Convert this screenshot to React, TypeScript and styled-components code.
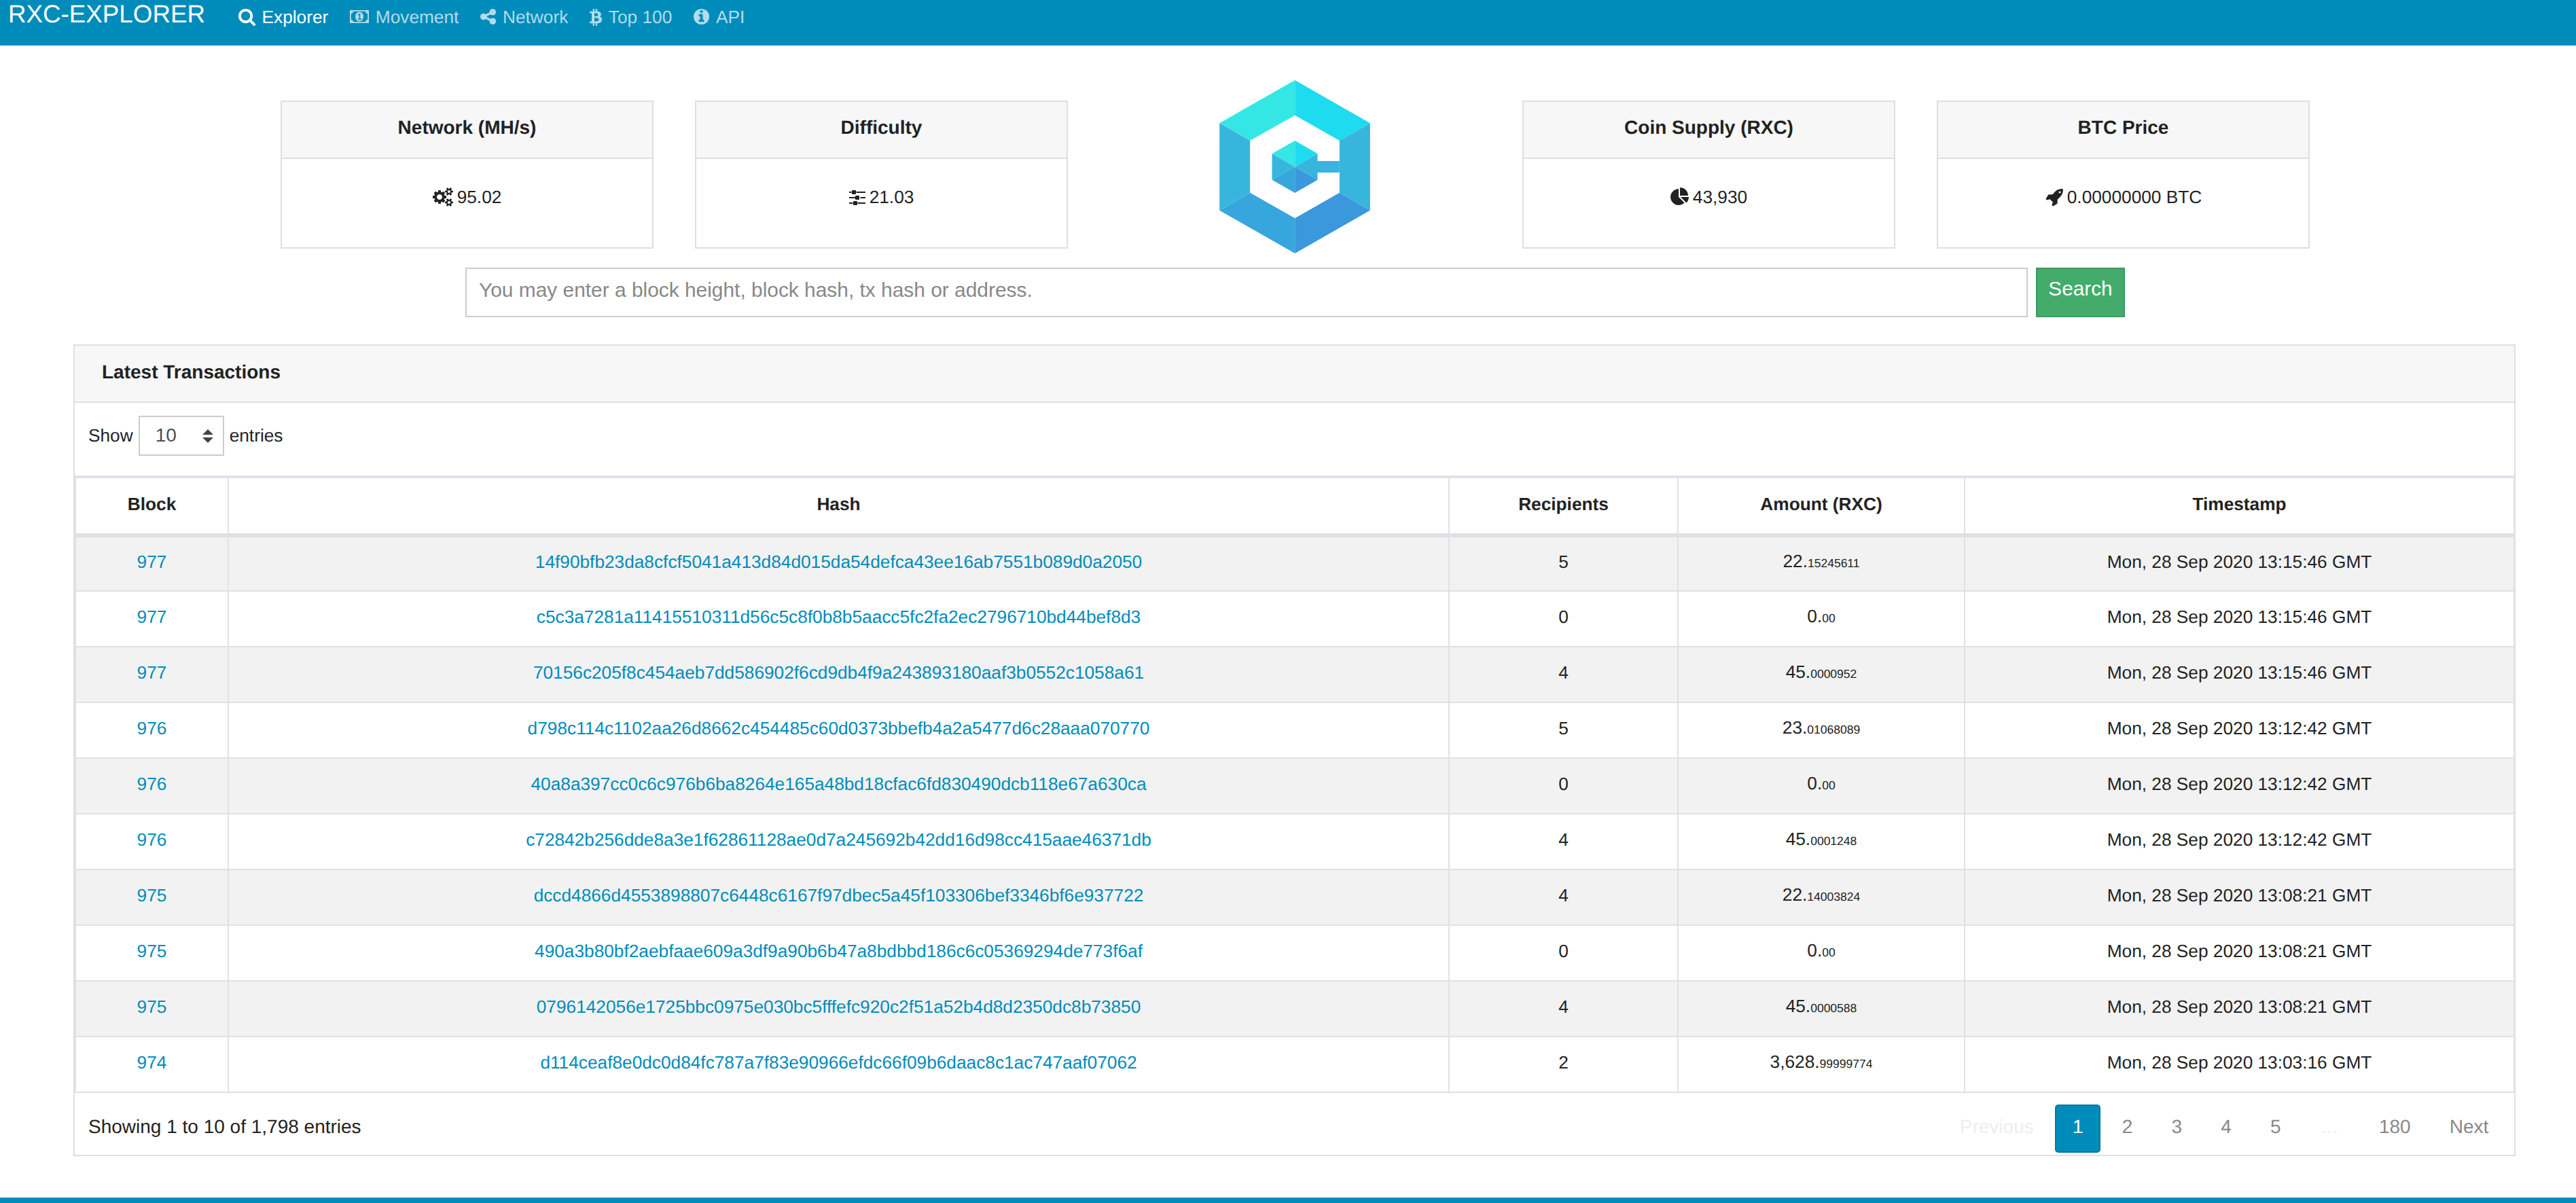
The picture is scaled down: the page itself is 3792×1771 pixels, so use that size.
import styled, { createGlobalStyle } from "styled-components";

const GlobalStyle = createGlobalStyle`
  * {
    box-sizing: border-box;
  }
  html, body {
    margin: 0;
    padding: 0;
    background: #fff;
    color: #222;
    font-family: "Liberation Sans", Arial, sans-serif;
    font-size: 26.25px;
    line-height: 42px;
    text-rendering: geometricPrecision;
  }
`;

const color = {
  primary: "#008cba",
  text: "#222222",
  headerBg: "#f7f7f7",
  cardBorder: "#dfdfdf",
  tableBorder: "#dee2e6",
  stripe: "#f2f2f2",
};

const Page = styled.div`
  width: 3792px;
  height: 1771px;
  overflow: hidden;
  display: flex;
  flex-direction: column;
`;

const NavBar = styled.nav`
  height: 67px;
  flex-shrink: 0;
  background: ${color.primary};
  display: flex;
  align-items: flex-start;
  padding-left: 12px;
`;

const Brand = styled.a`
  color: #fff;
  font-size: 36.75px;
  line-height: 42px;
  margin-right: 49px;
`;

const NavList = styled.div`
  display: flex;
  gap: 32px;
`;

const NavLink = styled.a<{ $active?: boolean }>`
  display: flex;
  align-items: center;
  gap: 9.5px;
  height: 49px;
  color: ${(p) => (p.$active ? "#fff" : "#b2dcea")};
`;

const Main = styled.main`
  width: 3595px;
  margin-left: 108px;
  flex: 1;
  padding-top: 51px;
`;

const StatRow = styled.section`
  display: flex;
  justify-content: center;
  align-items: flex-start;
  height: 255px;
  padding-left: 2px;
`;

const StatCard = styled.div<{ $gap?: number }>`
  width: 549px;
  height: 218px;
  margin-top: 30px;
  margin-right: ${(p) => p.$gap ?? 0}px;
  border: 2px solid ${color.cardBorder};
  display: flex;
  flex-direction: column;
`;

const StatTitle = styled.div`
  height: 84px;
  padding-bottom: 6px;
  background: ${color.headerBg};
  border-bottom: 2px solid ${color.cardBorder};
  font-size: 28px;
  font-weight: 700;
  display: flex;
  align-items: center;
  justify-content: center;
`;

const StatValue = styled.div`
  display: flex;
  justify-content: center;
  align-items: center;
  gap: 6px;
  height: 42px;
  margin-top: 35px;
`;

const LogoSlot = styled.div`
  width: 669px;
  padding-right: 2px;
  display: flex;
  justify-content: center;
`;

const SearchRow = styled.form`
  display: flex;
  justify-content: center;
  gap: 12px;
  margin-top: 21px;
  padding-left: 2px;
`;

const SearchInput = styled.input`
  width: 2300px;
  height: 73px;
  border: 2px solid #cccccc;
  padding: 0 18px 8px;
  font-family: inherit;
  font-size: 29.9px;
  background: #fff;
  outline: none;

  &::placeholder {
    color: #888888;
    opacity: 1;
  }
`;

const SearchButton = styled.button`
  width: 131px;
  height: 73px;
  background: #43ac6a;
  border: 2px solid #3c9a5f;
  color: #fff;
  padding: 0 0 12px;
  font-family: inherit;
  font-size: 29.75px;
`;

const Panel = styled.section`
  margin-top: 40px;
  border: 2px solid ${color.cardBorder};
`;

const PanelHeader = styled.div`
  height: 84px;
  padding: 0 0 5px 40px;
  background: ${color.headerBg};
  border-bottom: 2px solid ${color.cardBorder};
  font-size: 28px;
  font-weight: 700;
  display: flex;
  align-items: center;
`;

const LengthRow = styled.div`
  height: 107px;
  padding: 19px 0 0 20px;
  display: flex;
  align-items: flex-start;
  gap: 8px;
`;

const LengthLabel = styled.span`
  line-height: 58px;
`;

const SelectWrap = styled.div`
  position: relative;
  width: 126px;
  height: 59px;
`;

const Select = styled.select`
  width: 100%;
  height: 100%;
  appearance: none;
  background: #fff;
  border: 2px solid #cccccc;
  border-radius: 0;
  padding: 0 0 2px 23px;
  font-family: inherit;
  font-size: 28px;
  color: #495057;
`;

const SelectArrows = styled.svg`
  position: absolute;
  right: 16px;
  top: 20px;
  width: 16px;
  height: 20px;
  pointer-events: none;
`;

const Table = styled.table`
  width: 100%;
  table-layout: fixed;
  border-collapse: collapse;
`;

const HeadCell = styled.th<{ $width: number }>`
  width: ${(p) => p.$width}px;
  height: 86px;
  padding: 0 0 6px;
  border: 2px solid ${color.tableBorder};
  border-top-width: 4px;
  border-bottom-width: 6px;
  font-weight: 700;
  text-align: center;
`;

const Row = styled.tr<{ $striped: boolean }>`
  background: ${(p) => (p.$striped ? color.stripe : "#fff")};
`;

const Cell = styled.td`
  height: 82px;
  padding: 0 0 6px;
  border: 2px solid ${color.tableBorder};
  text-align: center;
`;

const TxLink = styled.a`
  color: ${color.primary};
`;

const Decimals = styled.span`
  font-size: 17.5px;
`;

const PanelFooter = styled.div`
  height: 91px;
  padding: 17px 12px 0 20px;
  font-size: 28px;
  display: flex;
  justify-content: space-between;
  align-items: flex-start;
`;

const Info = styled.div`
  margin-top: 12px;
`;

const Pagination = styled.div`
  display: flex;
  gap: 6px;
`;

const PageButton = styled.a<{ $active?: boolean; $disabled?: boolean }>`
  height: 71px;
  padding: 0 23.6px 6px;
  display: flex;
  align-items: center;
  border: 2px solid ${(p) => (p.$active ? "#0079a1" : "transparent")};
  border-radius: 5px;
  background: ${(p) => (p.$active ? color.primary : "transparent")};
  color: ${(p) => (p.$active ? "#fff" : p.$disabled ? "#eeeeee" : "#888888")};
`;

const PageEllipsis = styled(PageButton)`
  padding-right: 25.6px;
`;

const PageFooter = styled.footer`
  height: 8px;
  flex-shrink: 0;
  background: ${color.primary};
`;

const glyphs = {
  search: {
    x: 64,
    w: 1664,
    d: "M1216 832q0-185-131.5-316.5t-316.5-131.5-316.5 131.5-131.5 316.5 131.5 316.5 316.5 131.5 316.5-131.5 131.5-316.5zm512 832q0 52-38 90t-90 38q-54 0-90-38l-343-342q-179 124-399 124-143 0-273.5-55.5t-225-150-150-225-55.5-273.5 55.5-273.5 150-225 225-150 273.5-55.5 273.5 55.5 225 150 150 225 55.5 273.5q0 220-124 399l343 343q37 37 37 90z",
  },
  share: {
    x: 128,
    w: 1536,
    d: "M1344 1024q133 0 226.5 93.5t93.5 226.5-93.5 226.5-226.5 93.5-226.5-93.5-93.5-226.5q0-12 2-34l-360-180q-92 86-218 86-133 0-226.5-93.5t-93.5-226.5 93.5-226.5 226.5-93.5q126 0 218 86l360-180q-2-22-2-34 0-133 93.5-226.5t226.5-93.5 226.5 93.5 93.5 226.5-93.5 226.5-226.5 93.5q-126 0-218-86l-360 180q2 22 2 34t-2 34l360 180q92-86 218-86z",
  },
  btc: {
    x: 56,
    w: 1200,
    d: "M1167 640q18 182-131 258 117 28 175 103t45 214q-7 71-32.5 125t-64.5 89-97 58.5-121.5 34.5-145.5 15v255h-154v-251q-80 0-122-1v252h-154v-255q-18 0-54-.5t-55-.5h-200l31-183h111q50 0 58-51v-402h16q-6-1-16-1v-287q-13-68-89-68h-111v-164l212 1q64 0 97-1v-252h154v247q82-2 122-2v-245h154v252q79 7 140 22.5t113 45 82.5 78 36.5 114.5zm-215 545q0-36-15-64t-37-46-57.5-30.5-65.5-18.5-74-9-69-3-64.5 1-47.5 1v338q8 0 37 .5t48 .5 53-1.5 58.5-4 57-8.5 55.5-14 47.5-21 39.5-30 24.5-40 9.5-51zm-71-476q0-33-12.5-58.5t-30.5-42-48-28-55-16.5-61.5-8-58-2.5-54 1-39.5.5v307q5 0 34.5.5t46.5 0 50-2 55-5.5 51.5-11 48.5-18.5 37-27 27-38.5 9-51z",
  },
  info: {
    x: 128,
    w: 1536,
    d: "M1152 1376v-160q0-14-9-23t-23-9h-96v-512q0-14-9-23t-23-9h-320q-14 0-23 9t-9 23v160q0 14 9 23t23 9h96v320h-96q-14 0-23 9t-9 23v160q0 14 9 23t23 9h448q14 0 23-9t9-23zm-128-896v-160q0-14-9-23t-23-9h-192q-14 0-23 9t-9 23v160q0 14 9 23t23 9h192q14 0 23-9t9-23zm640 416q0 209-103 385.5t-279.5 279.5-385.5 103-385.5-103-279.5-279.5-103-385.5 103-385.5 279.5-279.5 385.5-103 385.5 103 279.5 279.5 103 385.5z",
  },
  cogs: {
    x: 0,
    w: 1920,
    d: "M896 896q0-106-75-181t-181-75-181 75-75 181 75 181 181 75 181-75 75-181zm768 512q0-52-38-90t-90-38-90 38-38 90q0 53 37.5 90.5t90.5 37.5 90.5-37.5 37.5-90.5zm0-1024q0-52-38-90t-90-38-90 38-38 90q0 53 37.5 90.5t90.5 37.5 90.5-37.5 37.5-90.5zm-384 421v185q0 10-7 19.5t-16 10.5l-155 24q-11 35-32 76 34 48 90 115 7 11 7 20 0 12-7 19-23 30-82.5 89.5t-78.5 59.5q-11 0-21-7l-115-90q-37 19-77 31-11 108-23 155-7 24-30 24h-186q-11 0-20-7.5t-10-17.5l-23-153q-34-10-75-31l-118 89q-7 7-20 7-11 0-21-8-144-133-144-160 0-9 7-19 10-14 41-53t47-61q-23-44-35-82l-152-24q-10-1-17-9.5t-7-19.5v-185q0-10 7-19.5t16-10.5l155-24q11-35 32-76-34-48-90-115-7-11-7-19 0-12 7-20 22-30 82-89t79-59q11 0 21 7l115 90q34-18 77-32 11-108 23-154 7-24 30-24h186q11 0 20 7.5t10 17.5l23 153q34 10 75 31l118-89q8-7 20-7 11 0 21 8 144 133 144 160 0 8-7 19-12 16-42 54t-45 60q23 48 34 82l152 23q10 2 17 10.5t7 19.5zm640 533v140q0 16-149 31-12 27-30 52 51 113 51 138 0 4-4 7-122 71-124 71-8 0-46-47t-52-68q-20 2-30 2t-30-2q-14 21-52 68t-46 47q-2 0-124-71-4-3-4-7 0-25 51-138-18-25-30-52-149-15-149-31v-140q0-16 149-31 13-29 30-52-51-113-51-138 0-4 4-7 4-2 35-20t59-34 30-16q8 0 46 46.5t52 67.5q20-2 30-2t30 2q51-71 92-112l6-2q4 0 124 70 4 3 4 7 0 25-51 138 17 23 30 52 149 15 149 31zm0-1024v140q0 16-149 31-12 27-30 52 51 113 51 138 0 4-4 7-122 71-124 71-8 0-46-47t-52-68q-20 2-30 2t-30-2q-14 21-52 68t-46 47q-2 0-124-71-4-3-4-7 0-25 51-138-18-25-30-52-149-15-149-31v-140q0-16 149-31 13-29 30-52-51-113-51-138 0-4 4-7 4-2 35-20t59-34 30-16q8 0 46 46.5t52 67.5q20-2 30-2t30 2q51-71 92-112l6-2q4 0 124 70 4 3 4 7 0 25-51 138 17 23 30 52 149 15 149 31z",
  },
  sliders: {
    x: 128,
    w: 1536,
    d: "M480 1408v128h-352v-128h352zm352-128q26 0 45 19t19 45v256q0 26-19 45t-45 19h-256q-26 0-45-19t-19-45v-256q0-26 19-45t45-19h256zm160-384v128h-864v-128h864zm-640-512v128h-224v-128h224zm1312 1024v128h-736v-128h736zm-960-1152q26 0 45 19t19 45v256q0 26-19 45t-45 19h-256q-26 0-45-19t-19-45v-256q0-26 19-45t45-19h256zm320 512q26 0 45 19t19 45v256q0 26-19 45t-45 19h-256q-26 0-45-19t-19-45v-256q0-26 19-45t45-19h256zm640 128v128h-480v-128h480zm0-512v128h-864v-128h864z",
  },
  pie: {
    x: 0,
    w: 1728,
    d: "M768 890l546 546q-106 108-247 168t-297 60q-209 0-385-103t-279-279-103-385 103-385 279-279 385-103v762zm187 6h773q0 156-60 297t-168 247zm709-128h-768v-768q209 0 385 103t279 279 103 385z",
  },
  rocket: {
    x: 0,
    w: 1728,
    d: "M1504 448q0-40-28-68t-68-28-68 28-28 68 28 68 68 28 68-28 28-68zm224-288q0 249-75.5 430.5t-253.5 360.5q-81 80-195 176l-20 379q-2 16-16 26l-384 224q-7 4-16 4-12 0-23-9l-64-64q-13-14-8-32l85-276-281-281-276 85q-3 1-9 1-14 0-23-9l-64-64q-17-19-5-39l224-384q10-14 26-16l379-20q96-114 176-195 188-187 358-258t431-71q14 0 24 9.5t10 22.5z",
  },
};

// font awesome 4 glyphs, em is the icon font size in px
const Glyph = ({ name, em }: { name: keyof typeof glyphs; em: number }) => {
  const g = glyphs[name];
  return (
    <svg
      width={(g.w * em) / 1792}
      height={em}
      viewBox={`${g.x} 0 ${g.w} 1792`}
      fill="currentColor"
    >
      <path d={g.d} />
    </svg>
  );
};

const MoneyIcon = () => (
  <svg width="28" height="19" viewBox="0 0 28 19" fill="currentColor">
    <path
      fillRule="evenodd"
      d="M0 0h28v19H0zM5 1.8H23Q23.3 4.7 26.2 5V14Q23.3 14.3 23 17.2H5Q4.7 14.3 1.8 14V5Q4.7 4.7 5 1.8z"
    />
    <ellipse cx="14" cy="9.5" rx="6" ry="7" />
    <path
      fill="#008cba"
      d="M12 14h5v-1.4h-1.7V5h-1.5l-2 1.9 1 1.1.9-.8v5.4H12z"
    />
  </svg>
);

const Logo = () => (
  <svg width="222" height="255" viewBox="135 55 665 765">
    <polygon fill="#35e7e4" points="468,55 135,245 270,322 468,210" />
    <polygon fill="#1fdbf0" points="468,55 800,245 665,322 468,210" />
    <polygon fill="#38b5dd" points="135,245 270,322 270,552 135,630" />
    <polygon fill="#38b5dd" points="800,245 665,322 665,552 800,630" />
    <polygon fill="#37a6dc" points="135,630 270,552 468,665 468,820" />
    <polygon fill="#3b98dc" points="800,630 665,552 468,665 468,820" />
    <polygon fill="#35e7e4" points="468,322 367,380 468,438" />
    <polygon fill="#1fdbf0" points="468,322 568,380 468,438" />
    <polygon fill="#38b5dd" points="367,380 468,438 367,495" />
    <polygon
      fill="#38b5dd"
      points="568,380 468,438 568,495 568,463 665,463 665,412 568,412"
    />
    <polygon fill="#37a6dc" points="367,495 468,438 468,553" />
    <polygon fill="#3b98dc" points="568,495 468,438 468,553" />
  </svg>
);

const columns = [
  { title: "Block", width: 225 },
  { title: "Hash", width: 1797 },
  { title: "Recipients", width: 337 },
  { title: "Amount (RXC)", width: 422 },
  { title: "Timestamp", width: 809 },
];

const rows = [
  ["977", "14f90bfb23da8cfcf5041a413d84d015da54defca43ee16ab7551b089d0a2050", "5", "22.", "15245611", "Mon, 28 Sep 2020 13:15:46 GMT"],
  ["977", "c5c3a7281a11415510311d56c5c8f0b8b5aacc5fc2fa2ec2796710bd44bef8d3", "0", "0.", "00", "Mon, 28 Sep 2020 13:15:46 GMT"],
  ["977", "70156c205f8c454aeb7dd586902f6cd9db4f9a243893180aaf3b0552c1058a61", "4", "45.", "0000952", "Mon, 28 Sep 2020 13:15:46 GMT"],
  ["976", "d798c114c1102aa26d8662c454485c60d0373bbefb4a2a5477d6c28aaa070770", "5", "23.", "01068089", "Mon, 28 Sep 2020 13:12:42 GMT"],
  ["976", "40a8a397cc0c6c976b6ba8264e165a48bd18cfac6fd830490dcb118e67a630ca", "0", "0.", "00", "Mon, 28 Sep 2020 13:12:42 GMT"],
  ["976", "c72842b256dde8a3e1f62861128ae0d7a245692b42dd16d98cc415aae46371db", "4", "45.", "0001248", "Mon, 28 Sep 2020 13:12:42 GMT"],
  ["975", "dccd4866d4553898807c6448c6167f97dbec5a45f103306bef3346bf6e937722", "4", "22.", "14003824", "Mon, 28 Sep 2020 13:08:21 GMT"],
  ["975", "490a3b80bf2aebfaae609a3df9a90b6b47a8bdbbd186c6c05369294de773f6af", "0", "0.", "00", "Mon, 28 Sep 2020 13:08:21 GMT"],
  ["975", "0796142056e1725bbc0975e030bc5fffefc920c2f51a52b4d8d2350dc8b73850", "4", "45.", "0000588", "Mon, 28 Sep 2020 13:08:21 GMT"],
  ["974", "d114ceaf8e0dc0d84fc787a7f83e90966efdc66f09b6daac8c1ac747aaf07062", "2", "3,628.", "99999774", "Mon, 28 Sep 2020 13:03:16 GMT"],
];

const App = () => {
  return (
    <Page>
      <GlobalStyle />
      <NavBar>
        <Brand>RXC-EXPLORER</Brand>
        <NavList>
          <NavLink $active>
            <Glyph name="search" em={27} />
            Explorer
          </NavLink>
          <NavLink>
            <MoneyIcon />
            Movement
          </NavLink>
          <NavLink>
            <Glyph name="share" em={27} />
            Network
          </NavLink>
          <NavLink>
            <Glyph name="btc" em={27} />
            Top 100
          </NavLink>
          <NavLink>
            <Glyph name="info" em={27} />
            API
          </NavLink>
        </NavList>
      </NavBar>

      <Main>
        <StatRow>
          <StatCard $gap={61}>
            <StatTitle>Network (MH/s)</StatTitle>
            <StatValue>
              <Glyph name="cogs" em={28} />
              95.02
            </StatValue>
          </StatCard>
          <StatCard>
            <StatTitle>Difficulty</StatTitle>
            <StatValue>
              <Glyph name="sliders" em={28} />
              21.03
            </StatValue>
          </StatCard>
          <LogoSlot>
            <Logo />
          </LogoSlot>
          <StatCard $gap={61}>
            <StatTitle>Coin Supply (RXC)</StatTitle>
            <StatValue>
              <Glyph name="pie" em={28} />
              43,930
            </StatValue>
          </StatCard>
          <StatCard>
            <StatTitle>BTC Price</StatTitle>
            <StatValue>
              <Glyph name="rocket" em={28} />
              0.00000000 BTC
            </StatValue>
          </StatCard>
        </StatRow>

        <SearchRow>
          <SearchInput placeholder="You may enter a block height, block hash, tx hash or address." />
          <SearchButton type="button">Search</SearchButton>
        </SearchRow>

        <Panel>
          <PanelHeader>Latest Transactions</PanelHeader>
          <LengthRow>
            <LengthLabel>Show</LengthLabel>
            <SelectWrap>
              <Select defaultValue="10">
                <option>10</option>
              </Select>
              <SelectArrows viewBox="0 0 16 20" fill="#444">
                <path d="M8 0l8 8H0zM0 12h16l-8 8z" />
              </SelectArrows>
            </SelectWrap>
            <LengthLabel>entries</LengthLabel>
          </LengthRow>

          <Table>
            <thead>
              <tr>
                {columns.map((c) => (
                  <HeadCell key={c.title} $width={c.width}>
                    {c.title}
                  </HeadCell>
                ))}
              </tr>
            </thead>
            <tbody>
              {rows.map((r, i) => (
                <Row key={r[1]} $striped={i % 2 === 0}>
                  <Cell>
                    <TxLink>{r[0]}</TxLink>
                  </Cell>
                  <Cell>
                    <TxLink>{r[1]}</TxLink>
                  </Cell>
                  <Cell>{r[2]}</Cell>
                  <Cell>
                    {r[3]}
                    <Decimals>{r[4]}</Decimals>
                  </Cell>
                  <Cell>{r[5]}</Cell>
                </Row>
              ))}
            </tbody>
          </Table>

          <PanelFooter>
            <Info>Showing 1 to 10 of 1,798 entries</Info>
            <Pagination>
              <PageButton $disabled>Previous</PageButton>
              <PageButton $active>1</PageButton>
              <PageButton>2</PageButton>
              <PageButton>3</PageButton>
              <PageButton>4</PageButton>
              <PageButton>5</PageButton>
              <PageEllipsis $disabled>…</PageEllipsis>
              <PageButton>180</PageButton>
              <PageButton>Next</PageButton>
            </Pagination>
          </PanelFooter>
        </Panel>
      </Main>

      <PageFooter />
    </Page>
  );
};

export default App;
